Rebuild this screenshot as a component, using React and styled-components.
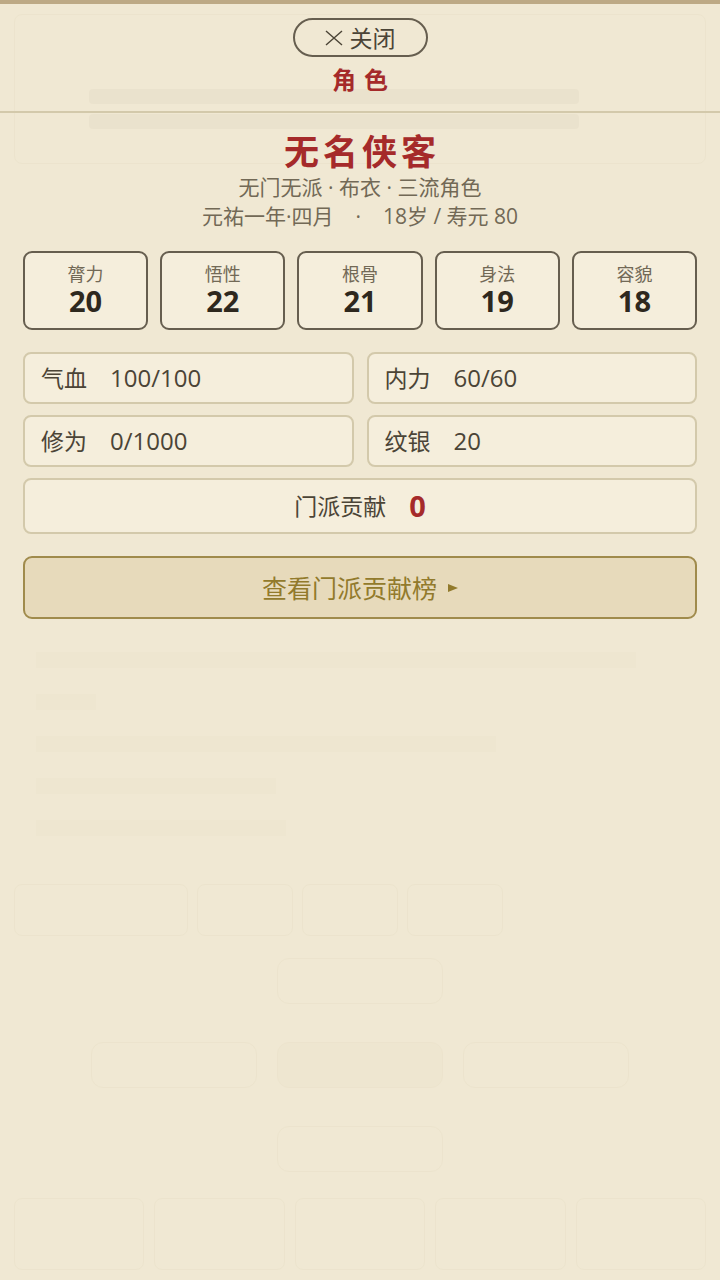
import React from 'react';
import styled, { createGlobalStyle } from 'styled-components';

const attributes = [
	{ name: '膂力', value: 20 },
	{ name: '悟性', value: 22 },
	{ name: '根骨', value: 21 },
	{ name: '身法', value: 19 },
	{ name: '容貌', value: 18 },
];

const stats = [
	{ name: '气血', value: '100/100' },
	{ name: '内力', value: '60/60' },
	{ name: '修为', value: '0/1000' },
	{ name: '纹银', value: '20' },
];

const storyLines = [600, 60, 460, 240, 250];
const tabs = [174, 96, 96, 96];

const App = () => {
	return (
		<Screen>
			<GlobalStyle />
			<Backdrop aria-hidden='true'>
				<GhostStatus>
					<GhostBar />
					<GhostBar />
				</GhostStatus>
				<GhostStory>
					{storyLines.map((width) => (
						<GhostLine key={width} $width={width} />
					))}
				</GhostStory>
				<GhostTabs>
					{tabs.map((width, i) => (
						<GhostBox key={i} $width={width} />
					))}
				</GhostTabs>
				<GhostMap>
					<GhostNode $area='north' />
					<GhostNode $area='west' />
					<GhostNode $area='here' $filled />
					<GhostNode $area='east' />
					<GhostNode $area='south' />
				</GhostMap>
				<GhostNav>
					{attributes.map(({ name }) => (
						<GhostNavItem key={name} />
					))}
				</GhostNav>
			</Backdrop>
			<Panel>
				<Header>
					<CloseButton type='button'>
						<svg width='18' height='16' viewBox='0 0 18 16' aria-hidden='true'>
							<path d='M1 1L17 15M17 1L1 15' stroke='currentColor' strokeWidth='1.4' />
						</svg>
						关闭
					</CloseButton>
					<PanelTitle>角色</PanelTitle>
				</Header>
				<Content>
					<Name>无名侠客</Name>
					<Info>无门无派 · 布衣 · 三流角色</Info>
					<Info>
						<span>元祐一年·四月</span>
						<Dot>·</Dot>
						<span>18岁 / 寿元 80</span>
					</Info>
					<Attributes>
						{attributes.map(({ name, value }) => (
							<Attribute key={name}>
								<dt>{name}</dt>
								<dd>{value}</dd>
							</Attribute>
						))}
					</Attributes>
					<Stats>
						{stats.map(({ name, value }) => (
							<Stat key={name}>
								<dt>{name}</dt>
								<dd>{value}</dd>
							</Stat>
						))}
						<Contribution>
							<dt>门派贡献</dt>
							<dd>0</dd>
						</Contribution>
					</Stats>
					<RankButton type='button'>
						查看门派贡献榜
						<svg width='10' height='8' viewBox='0 0 10 8' aria-hidden='true'>
							<path d='M0 0L10 4L0 8Z' fill='currentColor' />
						</svg>
					</RankButton>
				</Content>
			</Panel>
		</Screen>
	);
};

const GlobalStyle = createGlobalStyle`
	* {
		box-sizing: border-box;
	}
	body {
		margin: 0;
		background-color: #f0e8d3;
		color: #4b4436;
		font-family: 'Open Sans', 'Noto Sans CJK SC', sans-serif;
	}
	h1, h2, p, dl, dd {
		margin: 0;
	}
	button {
		font-family: inherit;
		cursor: pointer;
	}
`;

const Screen = styled.div`
	position: relative;
	min-height: 100vh;
	border-top: 4px solid #bda985;
`;

/* the game page, barely showing through the open panel */
const Backdrop = styled.div`
	position: absolute;
	inset: 0;
	overflow: hidden;
	padding: 10px 14px;
	display: flex;
	flex-direction: column;
	gap: 12px;
	opacity: 0.04;
`;

const GhostStatus = styled.div`
	height: 150px;
	border: 1px solid #a08a50;
	border-radius: 8px;
	padding: 74px 126px 0 74px;
	display: flex;
	flex-direction: column;
	gap: 10px;
`;

const GhostBar = styled.div`
	height: 15px;
	border-radius: 4px;
	background-color: #7a6c48;
`;

const GhostStory = styled.div`
	flex: 1;
	padding: 0 22px 36px;
	display: flex;
	flex-direction: column;
	justify-content: flex-end;
	gap: 26px;
`;

const GhostLine = styled.div`
	width: ${({ $width }) => $width}px;
	max-width: 100%;
	height: 16px;
	background-color: #d8c890;
`;

const GhostTabs = styled.div`
	display: flex;
	gap: 9px;
`;

const GhostBox = styled.div`
	width: ${({ $width }) => $width}px;
	height: 52px;
	border: 1px solid #a08a50;
	border-radius: 8px;
`;

const GhostMap = styled.div`
	align-self: center;
	padding: 10px 0 14px;
	display: grid;
	grid-template-columns: repeat(3, 166px);
	grid-template-areas:
		'. north .'
		'west here east'
		'. south .';
	column-gap: 20px;
	row-gap: 38px;
`;

const GhostNode = styled.div`
	grid-area: ${({ $area }) => $area};
	height: 46px;
	border: 1px solid #a08a50;
	border-radius: 12px;
	background-color: ${({ $filled }) => ($filled ? '#d8c890' : 'transparent')};
`;

const GhostNav = styled.div`
	display: grid;
	grid-template-columns: repeat(5, 1fr);
	gap: 10px;
`;

const GhostNavItem = styled.div`
	height: 72px;
	border: 1px solid #a08a50;
	border-radius: 8px;
`;

const Panel = styled.main`
	position: relative;
`;

const Header = styled.header`
	padding: 14px 24px 16px;
	border-bottom: 2px solid #d3c9ab;
	display: flex;
	flex-direction: column;
	align-items: center;
	gap: 6px;
`;

const CloseButton = styled.button`
	height: 39px;
	padding: 0 30px;
	display: flex;
	align-items: center;
	gap: 7px;
	border: 2px solid #665e4f;
	border-radius: 20px;
	background: transparent;
	color: #4b4436;
	font-size: 23px;
	line-height: 32px;
`;

const PanelTitle = styled.h2`
	padding-left: 8px;
	color: #a52a2a;
	font-family: KaiTi, STKaiti, 'Noto Sans CJK SC', serif;
	font-size: 24px;
	font-weight: 700;
	line-height: 32px;
	letter-spacing: 8px;
`;

const Content = styled.div`
	padding: 18px 23px;
`;

const Name = styled.h1`
	margin-bottom: 4px;
	padding-left: 4px;
	color: #a52a2a;
	font-family: KaiTi, STKaiti, 'Noto Sans CJK SC', serif;
	font-size: 35px;
	font-weight: 700;
	line-height: 38px;
	letter-spacing: 4px;
	text-align: center;
`;

const Info = styled.p`
	color: #726956;
	font-size: 21px;
	line-height: 29px;
	text-align: center;
`;

const Dot = styled.span`
	margin: 0 22px;
`;

const Attributes = styled.dl`
	margin-top: 20px;
	display: grid;
	grid-template-columns: repeat(5, 1fr);
	gap: 12px;
`;

const Attribute = styled.div`
	height: 79px;
	padding-top: 9px;
	border: 2px solid #665e4f;
	border-radius: 9px;
	background-color: #f5eedc;
	text-align: center;
	dt {
		color: #726956;
		font-size: 18px;
		line-height: 24px;
	}
	dd {
		color: #2e281e;
		font-size: 29px;
		font-weight: 700;
		line-height: 30px;
	}
`;

const Stats = styled.dl`
	margin-top: 22px;
	display: grid;
	grid-template-columns: 1fr 1fr;
	gap: 11px 13px;
`;

const Stat = styled.div`
	height: 52px;
	padding: 0 16px;
	display: flex;
	align-items: center;
	gap: 23px;
	border: 2px solid #d3c9ab;
	border-radius: 8px;
	background-color: #f5eedc;
	font-size: 23px;
	line-height: 32px;
	dd {
		font-size: 24px;
	}
`;

const Contribution = styled(Stat)`
	grid-column: 1 / -1;
	height: 56px;
	justify-content: center;
	dd {
		color: #a52a2a;
		font-size: 29px;
		font-weight: 700;
	}
`;

const RankButton = styled.button`
	width: 100%;
	height: 63px;
	margin-top: 22px;
	display: flex;
	align-items: center;
	justify-content: center;
	gap: 11px;
	border: 2px solid #a08b4c;
	border-radius: 9px;
	background-color: #e7dabb;
	color: #927a2c;
	font-size: 25px;
	line-height: 32px;
`;

export default App;
